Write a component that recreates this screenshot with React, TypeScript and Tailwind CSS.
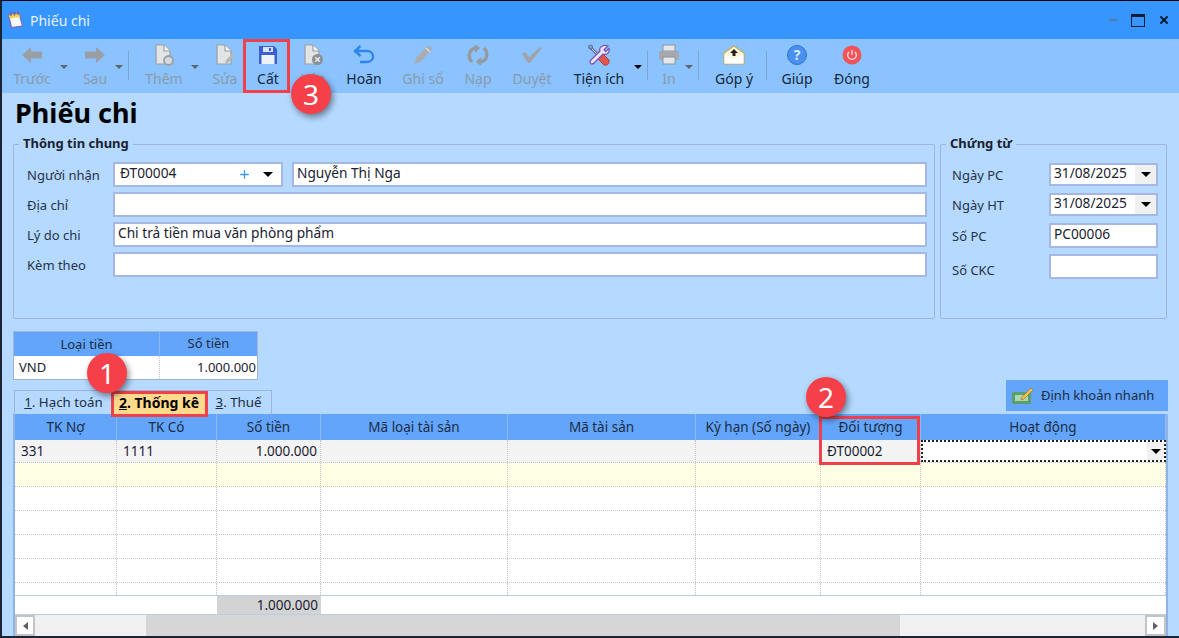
import React from "react";
import { Plus, Minus, X } from "lucide-react";

const GREY = "#9a9fa6";

const ArrowIcon = ({ flip }: { flip?: boolean }) => (
  <svg width="22" height="20" viewBox="0 0 22 20" style={{ transform: flip ? "scaleX(-1)" : undefined }}>
    <path d="M1 10 L10 2 V6.5 H21 V13.5 H10 V18 Z" fill={GREY} />
  </svg>
);

const DocIcon = ({ badge }: { badge?: "new" | "edit" | "del" }) => (
  <svg width="22" height="22" viewBox="0 0 22 22">
    <path d="M3 1 H11 L17 7 V20 H3 Z" fill="#e2e4e6" stroke="#9a9fa4" strokeWidth="1.2" />
    <path d="M11 1 V7 H17" fill="#f4f5f6" stroke="#9a9fa4" strokeWidth="1.2" />
    {badge === "new" && <circle cx="15.5" cy="16.5" r="4.5" fill="#d5d9dd" stroke="#9a9fa4" strokeWidth="1.8" />}
    {badge === "edit" && <path d="M11 20 L12 16 L19 9 L21 11 L14 19 Z" fill="#b3b8be" />}
    {badge === "del" && (
      <g>
        <circle cx="15.5" cy="15.5" r="5.5" fill="#8a9096" />
        <path d="M13.2 13.2 L17.8 17.8 M17.8 13.2 L13.2 17.8" stroke="#e6e8ea" strokeWidth="1.5" />
      </g>
    )}
  </svg>
);

const SaveIcon = () => (
  <svg width="20" height="20" viewBox="0 0 20 20">
    <path d="M1 1 H16 L19 4 V19 H1 Z" fill="#3b5fd0" />
    <rect x="5" y="2" width="10" height="5" fill="#d8e2f5" />
    <rect x="11" y="3" width="2" height="3" fill="#3b5fd0" />
    <rect x="3.5" y="10" width="13" height="9" fill="#eef2fb" />
  </svg>
);

const UndoIcon = () => (
  <svg width="22" height="20" viewBox="0 0 22 20" fill="none">
    <path d="M3 6 H14 C22 6 22 17 14 17 H7" stroke="#2f86ea" strokeWidth="2.4" />
    <path d="M7.5 1 L2 6 L7.5 11" stroke="#2f86ea" strokeWidth="2.4" />
  </svg>
);

const PencilIcon = () => (
  <svg width="22" height="22" viewBox="0 0 22 22">
    <path d="M2 20 L4 14 L15 2.5 C17 1 21 4 19.5 6.5 L8 18 Z" fill="#a9adb2" />
    <path d="M14 4 L18 8" stroke="#d9dcdf" strokeWidth="1.5" />
  </svg>
);

const ReloadIcon = () => (
  <svg width="22" height="20" viewBox="0 0 22 20" fill="none" stroke="#969a9f" strokeWidth="3.4">
    <path d="M5 17 C0 12 2 4 9 3" />
    <path d="M17 3 C22 8 20 16 13 17" />
    <path d="M8 0 L12 3 L8 7" strokeWidth="1.5" fill="#969a9f" />
    <path d="M14 13 L10 17 L14 20" strokeWidth="1.5" fill="#969a9f" />
  </svg>
);

const CheckIcon = () => (
  <svg width="22" height="18" viewBox="0 0 22 18">
    <path d="M1 8 L4 6 L8 11 L19 1 L21 2 L9 17 H7 Z" fill="#a0a4a9" />
  </svg>
);

const ToolsIcon = () => (
  <svg width="22" height="22" viewBox="0 0 22 22">
    {/* screwdriver */}
    <path d="M2 3 L12 13" stroke="#5b5f8a" strokeWidth="2.6" />
    <path d="M2 3 L12 13" stroke="#dfe8f4" strokeWidth="1" />
    <circle cx="2.6" cy="3" r="2" fill="#7fa0c8" stroke="#4d5f86" strokeWidth="0.8" />
    <path d="M12 12 L15 10 L21 16 C22 19 19 22 16 21 L10 15 Z" fill="#e2574c" stroke="#a83232" strokeWidth="0.8" />
    {/* wrench */}
    <path
      d="M20 2 L16 5.5 L17.5 7.5 L21 4.5 C22 9 18 11.5 15 10 L6 19 C3.5 21.5 0.5 18.5 3 16 L12 7 C10.5 3.5 15 0 20 2 Z"
      fill="#efe6fb"
      stroke="#7a55b8"
      strokeWidth="1.3"
    />
  </svg>
);

const PrinterIcon = () => (
  <svg width="22" height="22" viewBox="0 0 22 22">
    <rect x="5" y="1" width="12" height="6" fill="#e4e7ea" stroke="#8f959c" />
    <rect x="1" y="7" width="20" height="9" rx="1" fill="#a4a9af" />
    <rect x="5" y="13" width="12" height="7" fill="#e4e7ea" stroke="#8f959c" />
  </svg>
);

const MailIcon = () => (
  <svg width="22" height="20" viewBox="0 0 22 20">
    <path d="M1 8 L11 1 L21 8 V19 H1 Z" fill="#fdf6d8" stroke="#c6a75c" strokeWidth="1.2" />
    <path d="M1.5 18.5 V9 L11 14 L20.5 9 V18.5 Z" fill="#ffffff" />
    <path d="M11 4 L15 8 H12.5 V11 H9.5 V8 H7 Z" fill="#222" />
  </svg>
);

const HelpIcon = () => (
  <div className="flex h-[20px] w-[20px] items-center justify-center rounded-full border border-[#2f74d8] bg-[#4a90ee] font-['Liberation_Sans',sans-serif] text-[14px] leading-none font-bold text-[#dceaff]">
    ?
  </div>
);

const PowerIcon = () => (
  <svg width="20" height="20" viewBox="0 0 20 20" fill="none">
    <circle cx="10" cy="10" r="9.5" fill="#f0545a" />
    <path d="M7 7 A4.3 4.3 0 1 0 13 7" stroke="#fde4e4" strokeWidth="1.2" />
    <path d="M10 5 V10" stroke="#fde4e4" strokeWidth="1.2" />
  </svg>
);

const Caret = ({ dark }: { dark?: boolean }) => (
  <span className={`h-0 w-0 border-x-[4px] border-t-[4px] border-x-transparent ${dark ? "border-t-black" : "border-t-[#5f6670]"}`} />
);

const BigCaret = () => <span className="h-0 w-0 border-x-[5px] border-t-[5px] border-x-transparent border-t-black" />;

const Sep = ({ className }: { className: string }) => (
  <div className={`mt-[12px] h-[29px] w-[1px] self-start bg-[#7fa3cc] ${className}`} />
);

const CaretSlot = ({ className, dark }: { className: string; dark?: boolean }) => (
  <div className={`flex justify-center pt-[26px] ${className}`}>
    <Caret dark={dark} />
  </div>
);

const Tool = ({
  label,
  icon,
  off,
  className,
}: {
  label: string;
  icon: React.ReactNode;
  off?: boolean;
  className: string;
}) => (
  <div className={`flex shrink-0 flex-col items-center pt-[4px] ${className}`}>
    <div className="flex h-[24px] items-center justify-center">{icon}</div>
    <span className={`mt-[3px] text-[14px] leading-[18px] whitespace-nowrap ${off ? "text-[#8b9aaa]" : "text-[#17263a]"}`}>
      {label}
    </span>
  </div>
);

const Input = ({ value, className, arrow }: { value?: string; className: string; arrow?: boolean }) => (
  <div className={`flex items-center border-2 border-[#a5b7e4] bg-white text-[13.7px] text-[#1a2230] ${className}`}>
    <span className="flex-1 pb-[2px] pl-[3px] whitespace-nowrap">{value}</span>
    {arrow && (
      <span className="flex h-full w-[21px] items-center justify-center bg-[#f0f0f0]">
        <BigCaret />
      </span>
    )}
  </div>
);

const FormLabel = ({ children, className }: { children: React.ReactNode; className: string }) => (
  <span className={`pt-[2px] text-[13px] whitespace-nowrap text-[#25334a] ${className}`}>{children}</span>
);

const Group = ({ title, className, children }: { title: string; className: string; children: React.ReactNode }) => (
  <div className={`relative h-[175px] rounded-[2px] border border-[#9db4dc] ${className}`}>
    <span className="absolute -top-[11px] left-[5px] bg-[#b5d9ff] px-[4px] text-[13px] leading-[18px] font-bold text-[#1a2230]">
      {title}
    </span>
    {children}
  </div>
);

const COLS = ["w-[102px]", "w-[100px]", "w-[104px]", "w-[187px]", "w-[188px]", "w-[125px]", "w-[100px]", "flex-1"];
const HEAD = ["TK Nợ", "TK Có", "Số tiền", "Mã loại tài sản", "Mã tài sản", "Kỳ hạn (Số ngày)", "Đối tượng", "Hoạt động"];

const Badge = ({ n, className }: { n: number; className: string }) => (
  <div
    className={`absolute z-20 flex h-[40px] w-[40px] items-center justify-center rounded-full bg-[#f5404a] font-['Liberation_Sans',sans-serif] text-[28px] text-white shadow-[2px_3px_6px_rgba(0,0,0,0.45)] ${className}`}
  >
    {n}
  </div>
);

const RedBox = ({ className }: { className: string }) => (
  <div className={`pointer-events-none absolute z-10 border-[3px] border-[#f0404a] ${className}`} />
);

const BlankRow = ({ bg }: { bg: string }) => (
  <div className={`flex h-[24px] shrink-0 border-b border-dotted border-[#c4c4c4] ${bg}`}>
    {COLS.map((c, i) => (
      <div key={i} className={`${c} border-r border-dotted border-[#c4c4c4]`} />
    ))}
  </div>
);

export default function App() {
  return (
    <div className="relative flex h-[638px] w-[1179px] flex-col overflow-hidden border-t border-b-2 border-l-2 border-t-black border-b-[#1c2433] border-l-[#1c2433] bg-[#b5d9ff] font-['Noto_Sans',sans-serif]">
      {/* title bar */}
      <div className="flex h-[38px] shrink-0 items-center bg-[#3695ff] pr-[9px] pl-[5px]">
        <svg width="17" height="18" viewBox="0 0 17 18">
          <path d="M1.5 3.5 L12 2 L15.5 15 L4.5 16.5 Z" fill="#f6f8ff" stroke="#7d68b4" strokeWidth="1.2" />
          <path d="M1.8 4 L12 2.4 L13 6 L2.6 7.5 Z" fill="#f2d24a" />
          <path d="M4 1 V5 M7.5 0.5 V4.5 M11 0.5 V4" stroke="#6c5aa0" strokeWidth="1.3" />
        </svg>
        <span className="ml-[6px] text-[14px] text-[#e8f3ff]">Phiếu chi</span>
        <div className="ml-auto flex items-center">
          <Minus size={12} strokeWidth={3} className="text-[#5c7190]" />
          <div className="ml-[12px] h-[13px] w-[14px] border-[1.5px] border-t-[3px] border-[#0d1d33]" />
          <X size={12} strokeWidth={4} className="ml-[13px] text-[#0d1d33]" />
        </div>
      </div>

      {/* toolbar */}
      <div className="flex h-[54px] shrink-0 items-start bg-[#8ac3ff] pl-[4px]">
        <Tool className="w-[52px]" off label="Trước" icon={<ArrowIcon />} />
        <CaretSlot className="w-[12px]" />
        <Tool className="ml-[5px] w-[40px]" off label="Sau" icon={<ArrowIcon flip />} />
        <CaretSlot className="w-[8px]" />
        <Sep className="ml-[5px]" />
        <Tool className="ml-[10px] w-[50px]" off label="Thêm" icon={<DocIcon badge="new" />} />
        <CaretSlot className="w-[12px]" />
        <Tool className="ml-[4px] w-[40px]" off label="Sửa" icon={<DocIcon badge="edit" />} />
        <Tool className="ml-[1px] w-[44px]" label="Cất" icon={<SaveIcon />} />
        <Tool className="ml-[3px] w-[40px]" off label="Xóa" icon={<DocIcon badge="del" />} />
        <Tool className="ml-[7px] w-[48px]" label="Hoãn" icon={<UndoIcon />} />
        <Tool className="ml-[10px] w-[50px]" off label="Ghi sổ" icon={<PencilIcon />} />
        <Tool className="ml-[10px] w-[40px]" off label="Nạp" icon={<ReloadIcon />} />
        <Tool className="ml-[10px] w-[48px]" off label="Duyệt" icon={<CheckIcon />} />
        <Tool className="ml-[12px] w-[62px]" label="Tiện ích" icon={<ToolsIcon />} />
        <CaretSlot className="ml-[2px] w-[12px]" dark />
        <Sep className="ml-[3px]" />
        <Tool className="ml-[6px] w-[30px]" off label="In" icon={<PrinterIcon />} />
        <CaretSlot className="w-[10px]" />
        <Sep className="ml-[4px]" />
        <Tool className="ml-[10px] w-[50px]" label="Góp ý" icon={<MailIcon />} />
        <Sep className="ml-[7px]" />
        <Tool className="ml-[10px] w-[40px]" label="Giúp" icon={<HelpIcon />} />
        <Tool className="ml-[11px] w-[48px]" label="Đóng" icon={<PowerIcon />} />
      </div>

      {/* body */}
      <div className="flex min-h-0 flex-1 flex-col pr-[11px] pl-[11px]">
        <h1 className="flex h-[43px] shrink-0 items-center pb-[3px] pl-[2px] font-['Liberation_Sans',sans-serif] text-[27px] font-bold text-black">
          Phiếu chi
        </h1>

        <div className="mt-[8px] flex shrink-0 gap-[5px]">
          <Group title="Thông tin chung" className="w-[922px]">
            <div className="flex flex-col gap-[5px] pt-[17px] pr-[7px] pl-[13px]">
              <div className="flex items-center">
                <FormLabel className="w-[86px]">Người nhận</FormLabel>
                <div className="flex h-[25px] w-[170px] items-center border-2 border-[#a5b7e4] bg-white pr-[8px] pl-[5px] text-[13.7px] text-[#1a2230]">
                  <span className="flex-1 pb-[2px]">ĐT00004</span>
                  <Plus size={13} strokeWidth={2.4} className="mr-[12px] text-[#3f9be8]" />
                  <BigCaret />
                </div>
                <Input className="ml-[9px] h-[25px] flex-1" value="Nguyễn Thị Nga" />
              </div>
              <div className="flex items-center">
                <FormLabel className="w-[86px]">Địa chỉ</FormLabel>
                <Input className="h-[25px] flex-1" />
              </div>
              <div className="flex items-center">
                <FormLabel className="w-[86px]">Lý do chi</FormLabel>
                <Input className="h-[25px] flex-1" value="Chi trả tiền mua văn phòng phẩm" />
              </div>
              <div className="flex items-center">
                <FormLabel className="w-[86px]">Kèm theo</FormLabel>
                <Input className="h-[25px] flex-1" />
              </div>
            </div>
          </Group>
          <Group title="Chứng từ" className="w-[227px]">
            <div className="flex flex-col pt-[18px] pr-[8px] pl-[11px]">
              <div className="flex items-center">
                <FormLabel className="w-[97px]">Ngày PC</FormLabel>
                <Input className="h-[23px] flex-1" value="31/08/2025" arrow />
              </div>
              <div className="mt-[7px] flex items-center">
                <FormLabel className="w-[97px]">Ngày HT</FormLabel>
                <Input className="h-[23px] flex-1" value="31/08/2025" arrow />
              </div>
              <div className="mt-[7px] flex items-center">
                <FormLabel className="w-[97px]">Số PC</FormLabel>
                <Input className="h-[25px] flex-1" value="PC00006" />
              </div>
              <div className="mt-[5px] flex items-center">
                <FormLabel className="mt-[6px] w-[97px]">Số CKC</FormLabel>
                <Input className="h-[25px] flex-1" />
              </div>
            </div>
          </Group>
        </div>

        {/* currency table */}
        <div className="mt-[12px] w-[245px] shrink-0 border border-[#9db4dc] text-[13px]">
          <div className="flex h-[24px] items-center bg-[#62a5fa] text-center text-[#1c2c44]">
            <span className="w-[146px] border-r border-[#8ab8f0] leading-[24px]">Loại tiền</span>
            <span className="flex-1">Số tiền</span>
          </div>
          <div className="flex h-[23px] items-center bg-white text-[#1a2230]">
            <span className="w-[146px] border-r border-dotted border-[#c4c4c4] pl-[5px] leading-[23px]">VND</span>
            <span className="flex-1 pr-[1px] text-right">1.000.000</span>
          </div>
        </div>

        {/* tabs */}
        <div className="flex h-[34px] shrink-0 items-end justify-between">
          <div className="ml-[1px] flex h-[24px] w-[258px] items-end border border-b-0 border-[#9db4dc] text-[13.3px] text-[#1c2c44]">
            <span className="flex h-full w-[97px] items-center justify-center">
              <span className="underline">1</span>. Hạch toán
            </span>
            <span className="flex h-full w-[94px] items-center justify-center bg-[#ffd98c] text-[14px] font-bold text-black">
              <span className="underline">2</span>. Thống kê
            </span>
            <span className="flex h-full flex-1 items-center justify-center">
              <span className="underline">3</span>. Thuế
            </span>
          </div>
          <div className="mb-[3px] flex h-[31px] w-[162px] items-center bg-[#62a5fa] pl-[6px] text-[13px] text-[#1c2c44]">
            <svg width="22" height="18" viewBox="0 0 22 18">
              <rect x="0" y="5" width="19" height="12" rx="1" fill="#5aa06e" />
              <rect x="3" y="8" width="13" height="6" fill="#a9d7b2" />
              <path d="M10 10 L19 1 L21 3 L12 12 L9 13 Z" fill="#f2c14e" stroke="#a8632a" strokeWidth="0.6" />
            </svg>
            <span className="ml-[7px]">Định khoản nhanh</span>
          </div>
        </div>

        {/* grid */}
        <div className="flex min-h-0 flex-1 flex-col border-x-2 border-[#8fb3e6] text-[13.5px]">
          <div className="flex h-[26px] shrink-0 bg-[#62a5fa] text-[#1c2c44]">
            {HEAD.map((h, i) => (
              <div key={h} className={`${COLS[i]} flex items-center justify-center border-r border-[#8ab8f0]`}>
                {h}
              </div>
            ))}
          </div>
          <div className="flex h-[23px] shrink-0 border-b border-dotted border-[#c4c4c4] bg-[#f3f3f3] text-[#1a2230]">
            <div className={`${COLS[0]} flex items-center border-r border-dotted border-[#c4c4c4] pl-[6px]`}>331</div>
            <div className={`${COLS[1]} flex items-center border-r border-dotted border-[#c4c4c4] pl-[6px]`}>1111</div>
            <div className={`${COLS[2]} flex items-center justify-end border-r border-dotted border-[#c4c4c4] pr-[3px]`}>1.000.000</div>
            <div className={`${COLS[3]} border-r border-dotted border-[#c4c4c4]`} />
            <div className={`${COLS[4]} border-r border-dotted border-[#c4c4c4]`} />
            <div className={`${COLS[5]} border-r border-dotted border-[#c4c4c4]`} />
            <div className={`${COLS[6]} flex items-center border-r border-dotted border-[#c4c4c4] pl-[6px]`}>ĐT00002</div>
            <div className="flex flex-1 justify-end border-2 border-dotted border-[#222] bg-white">
              <span className="flex w-[17px] items-center justify-center bg-[#f0f0f0]">
                <BigCaret />
              </span>
            </div>
          </div>
          <BlankRow bg="bg-[#ffffe6]" />
          <BlankRow bg="bg-white" />
          <BlankRow bg="bg-white" />
          <BlankRow bg="bg-white" />
          <BlankRow bg="bg-white" />
          <div className="flex h-[12px] shrink-0 bg-white">
            {COLS.map((c, i) => (
              <div key={i} className={`${c} border-r border-dotted border-[#c4c4c4]`} />
            ))}
          </div>
          {/* totals */}
          <div className="flex h-[20px] shrink-0 border-y border-[#b9cde6] bg-white">
            <div className="w-[202px]" />
            <div className="flex w-[104px] items-center justify-end bg-[#d3d3d3] pr-[3px] text-[#1a2230]">1.000.000</div>
          </div>
          {/* scrollbar */}
          <div className="flex min-h-0 flex-1 bg-[#f0f0f0]">
            <div className="flex w-[20px] items-center justify-center border-2 border-[#c4c4c4] bg-white">
              <span className="h-0 w-0 border-y-[4px] border-r-[5px] border-y-transparent border-r-[#606060]" />
            </div>
            <div className="w-[111px]" />
            <div className="w-[754px] bg-[#d6d6d6]" />
            <div className="flex-1" />
            <div className="flex w-[21px] items-center justify-center border-2 border-[#c4c4c4] bg-white">
              <span className="h-0 w-0 border-y-[4px] border-l-[5px] border-y-transparent border-l-[#606060]" />
            </div>
          </div>
        </div>
      </div>

      {/* callouts */}
      <RedBox className="top-[38px] left-[241px] h-[54px] w-[47px]" />
      <RedBox className="top-[390px] left-[109px] h-[26px] w-[97px]" />
      <RedBox className="top-[415px] left-[817px] h-[49px] w-[101px]" />
      <Badge n={3} className="top-[73px] left-[289px]" />
      <Badge n={1} className="top-[352px] left-[85px]" />
      <Badge n={2} className="top-[376px] left-[804px]" />
    </div>
  );
}
